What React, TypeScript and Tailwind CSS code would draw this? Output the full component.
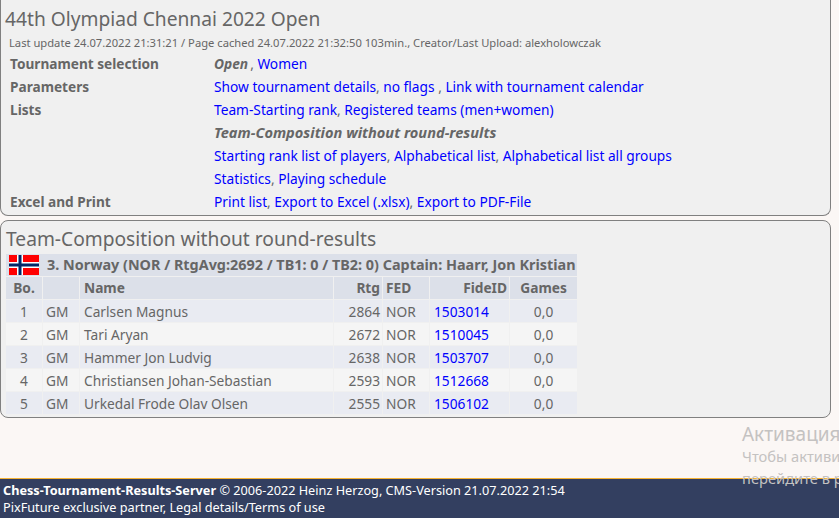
const players = [
  { bo: 1, name: 'Carlsen Magnus', rtg: 2864, id: '1503014' },
  { bo: 2, name: 'Tari Aryan', rtg: 2672, id: '1510045' },
  { bo: 3, name: 'Hammer Jon Ludvig', rtg: 2638, id: '1503707' },
  { bo: 4, name: 'Christiansen Johan-Sebastian', rtg: 2593, id: '1512668' },
  { bo: 5, name: 'Urkedal Frode Olav Olsen', rtg: 2555, id: '1506102' },
]

function NorwayFlag() {
  return (
    <svg viewBox="0 0 30 20" width="30" height="20" className="block">
      <rect width="30" height="20" fill="#ff0000" />
      <rect x="8" width="6" height="20" fill="#ffffff" />
      <rect y="7" width="30" height="6" fill="#ffffff" />
      <rect x="9.5" width="3" height="20" fill="#002868" />
      <rect y="8.5" width="30" height="3" fill="#002868" />
    </svg>
  )
}

function Row({ label, children }: { label?: string; children: React.ReactNode }) {
  return (
    <div className="flex h-[23px] items-center">
      <div className="w-[204px] text-[13.65px] font-bold">{label}</div>
      <div>{children}</div>
    </div>
  )
}

function L({ children }: { children: React.ReactNode }) {
  return <a className="text-[#0000ff]">{children}</a>
}

export default function App() {
  return (
    <div className="relative flex h-[518px] w-[839px] flex-col overflow-hidden bg-[#fbf7f5] font-['Noto_Sans',sans-serif] text-[13.72px] text-[#666666]">
      {/* Top panel */}
      <section className="mr-2 h-[216px] rounded-b-lg border border-t-0 border-[#808080] bg-[#f0f0f0] pl-[4px]">
        <h1 className="pt-[5px] text-[19.2px] leading-[28px]">44th Olympiad Chennai 2022 Open</h1>
        <p className="pl-[4px] pt-[1px] text-[11.2px] leading-[18px]">
          Last update 24.07.2022 21:31:21 / Page cached 24.07.2022 21:32:50 103min., Creator/Last Upload: alexholowczak
        </p>
        <div className="pl-[5px] pt-[1px]">
          <Row label="Tournament selection">
            <b className="pr-[2px]"><i>Open</i></b>, <L>Women</L>
          </Row>
          <Row label="Parameters">
            <L>Show tournament details</L>, <L>no flags</L> , <L>Link with tournament calendar</L>
          </Row>
          <Row label="Lists">
            <L>Team-Starting rank</L>, <L>Registered teams (men+women)</L>
          </Row>
          <Row>
            <b className="-mt-[2px] block text-[14.6px]"><i>Team-Composition without round-results</i></b>
          </Row>
          <Row>
            <L>Starting rank list of players</L>, <L>Alphabetical list</L>, <L>Alphabetical list all groups</L>
          </Row>
          <Row>
            <L>Statistics</L>, <L>Playing schedule</L>
          </Row>
          <Row label="Excel and Print">
            <L>Print list</L>, <L>Export to Excel (.xlsx)</L>, <L>Export to PDF-File</L>
          </Row>
        </div>
      </section>

      {/* Team panel */}
      <section className="mr-2 mt-1 h-[198px] rounded-lg border border-[#808080] bg-[#f0f0f0] pl-[5px]">
        <h2 className="pb-px pt-[4px] text-[19.2px] leading-[28px]">Team-Composition without round-results</h2>
        <table className="w-[571px] table-fixed border-separate border-spacing-0 leading-[22px]">
          <colgroup>
            <col className="w-[37px]" />
            <col className="w-[37px]" />
            <col className="w-[254px]" />
            <col className="w-[49px]" />
            <col className="w-[47px]" />
            <col className="w-[80px]" />
            <col className="w-[67px]" />
          </colgroup>
          <tbody>
            <tr className="bg-[#dce0e9] font-bold">
              <td colSpan={7} className="h-[23px] border-b border-[#f0f0f0] p-0">
                <div className="flex h-[22px] items-center whitespace-nowrap">
                  <span className="ml-[3px] mr-2"><NorwayFlag /></span>
                  <span className="text-[14.4px]">3. Norway (NOR / RtgAvg:2692 / TB1: 0 / TB2: 0) Captain: Haarr, Jon Kristian</span>
                </div>
              </td>
            </tr>
            <tr className="bg-[#dce0e9] font-bold">
              <td className="border-b border-r border-[#f0f0f0] text-center">Bo.</td>
              <td className="border-b border-r border-[#f0f0f0]"></td>
              <td className="border-b border-r border-[#f0f0f0] pl-1">Name</td>
              <td className="border-b border-r border-[#f0f0f0] pr-[2px] text-right">Rtg</td>
              <td className="border-b border-r border-[#f0f0f0] pl-[3px]">FED</td>
              <td className="border-b border-r border-[#f0f0f0] pr-[2px] text-right">FideID</td>
              <td className="border-b border-[#f0f0f0] text-center">Games</td>
            </tr>
            {players.map((p, i) => (
              <tr key={p.bo} className={i % 2 === 0 ? 'bg-[#e9ebf2]' : 'bg-[#f5f5f5]'}>
                <td className="border-b border-r border-[#f0f0f0] pt-px text-center leading-[21px]">{p.bo}</td>
                <td className="border-b border-r border-[#f0f0f0] pl-[3px] pt-px leading-[21px]">GM</td>
                <td className="border-b border-r border-[#f0f0f0] pl-1 pt-px leading-[21px]">{p.name}</td>
                <td className="border-b border-r border-[#f0f0f0] pr-[2px] pt-px text-right leading-[21px]">{p.rtg}</td>
                <td className="border-b border-r border-[#f0f0f0] pl-[3px] pt-px leading-[21px]">NOR</td>
                <td className="border-b border-r border-[#f0f0f0] pl-1 pt-px leading-[21px]"><L>{p.id}</L></td>
                <td className="border-b border-[#f0f0f0] pt-px text-center leading-[21px]">0,0</td>
              </tr>
            ))}
          </tbody>
        </table>
      </section>

      {/* Footer */}
      <footer className="mt-auto h-[40px] border-t border-[#f5b335] bg-[#333f60] pl-[3px] pt-[3px] text-[12.7px] leading-[17px] text-white">
        <div><b>Chess-Tournament-Results-Server</b> © 2006-2022 Heinz Herzog, CMS-Version 21.07.2022 21:54</div>
        <div>PixFuture exclusive partner, Legal details/Terms of use</div>
      </footer>

      {/* Windows activation watermark */}
      <div className="absolute left-[742px] top-[423px] w-[200px] whitespace-nowrap text-[#c4c2c1]">
        <div className="text-[19px] leading-[22px]">Активация Windows</div>
        <div className="text-[14.7px] leading-[22px]">Чтобы активировать</div>
        <div className="text-[14.7px] leading-[22px]">перейдите в раздел</div>
      </div>
    </div>
  )
}
